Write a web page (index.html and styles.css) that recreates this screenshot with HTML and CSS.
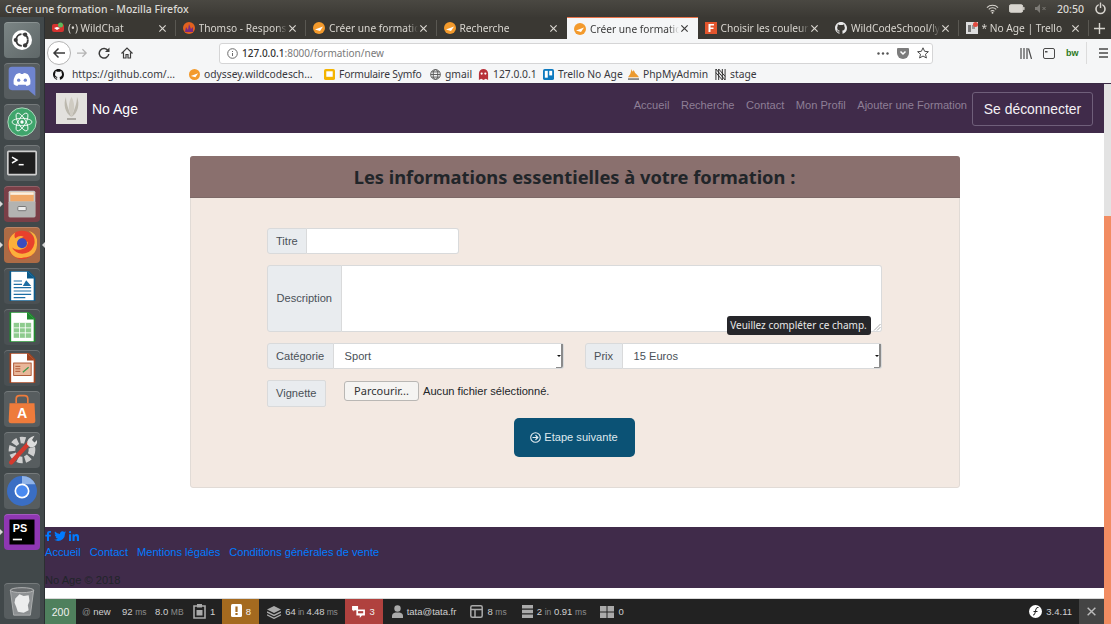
FILE: index.html
```html
<!DOCTYPE html>
<html lang="fr">
<head>
  <meta charset="UTF-8" />
  <meta name="viewport" content="width=device-width, initial-scale=1.0"/>
  <title>Créer une formation</title>
  <link rel="stylesheet" href="styles.css">
</head>
<body>

<svg class="defs" width="0" height="0">
  <symbol id="x" viewBox="0 0 10 10"><path d="M1.5 1.5l7 7M8.5 1.5l-7 7" stroke="currentColor" stroke-width="1.3" fill="none"/></symbol>
  <symbol id="ody" viewBox="0 0 12 12"><circle cx="6" cy="6" r="6" fill="#f39a2c"/><path d="M2 7.5L10 4.5 7 9z" fill="#fff"/></symbol>
  <symbol id="gh" viewBox="0 0 16 16"><path fill="currentColor" d="M8 0C3.58 0 0 3.58 0 8c0 3.54 2.29 6.53 5.47 7.59.4.07.55-.17.55-.38v-1.34c-2.23.48-2.69-1.07-2.69-1.07-.36-.92-.89-1.17-.89-1.17-.73-.5.05-.49.05-.49.8.06 1.23.82 1.23.82.71 1.22 1.87.87 2.33.66.07-.52.28-.87.5-1.07-1.78-.2-3.64-.89-3.64-3.95 0-.87.31-1.59.82-2.15-.08-.2-.36-1.02.08-2.12 0 0 .67-.21 2.2.82A7.6 7.6 0 0 1 8 3.87c.68 0 1.36.09 2 .27 1.53-1.04 2.2-.82 2.2-.82.44 1.1.16 1.92.08 2.12.51.56.82 1.27.82 2.15 0 3.07-1.87 3.75-3.65 3.95.29.25.54.73.54 1.48v2.2c0 .21.15.46.55.38A8 8 0 0 0 16 8c0-4.42-3.58-8-8-8z"/></symbol>
</svg>

<header class="panel">
  <span class="panel-title">Créer une formation - Mozilla Firefox</span>
  <div class="panel-right">
    <svg width="13" height="10" viewBox="0 0 14 10"><path d="M1 3.500a8.500 8.500 0 0 1 12 0M3 5.500a5.500 5.500 0 0 1 8 0M5 7.500a2.500 2.500 0 0 1 4 0" stroke="#d8d5cf" fill="none" stroke-width="1.100"/><circle cx="7" cy="9" r="1" fill="#d8d5cf"/></svg>
    <svg width="16" height="9" viewBox="0 0 17 9"><rect x=".5" y=".5" width="14" height="8" rx="1.500" fill="#d8d5cf" stroke="#d8d5cf"/><rect x="15" y="3" width="1.500" height="3" fill="#d8d5cf"/></svg>
    <svg width="12" height="9" viewBox="0 0 12 9"><path d="M0 3h2l3-3v9L2 6H0z" fill="#7d7b76"/><path d="M7.500 3l3 3M10.500 3l-3 3" stroke="#7d7b76"/></svg>
    <span class="panel-clock">20:50</span>
    <svg width="13" height="13" viewBox="0 0 13 13"><circle cx="6.500" cy="7" r="4.500" fill="none" stroke="#d8d5cf" stroke-width="1.600"/><path d="M6.500 0v6" stroke="#3d3b37" stroke-width="3.500"/><path d="M6.500 .5v5.500" stroke="#d8d5cf" stroke-width="1.500"/></svg>
  </div>
</header>

<div class="desk">

  <nav class="launcher">
    <div class="tile t-ubuntu"><svg viewBox="0 0 36 36"><circle cx="18" cy="18" r="12" fill="#fff"/><circle cx="18" cy="18" r="7" fill="none" stroke="#3a3a3a" stroke-width="2.200" stroke-dasharray="9.500 1.500"/><circle cx="10.500" cy="18" r="2.500" fill="#3a3a3a"/><circle cx="21.800" cy="11.500" r="2.500" fill="#3a3a3a"/><circle cx="21.800" cy="24.500" r="2.500" fill="#3a3a3a"/></svg></div>
    <div class="tile t-grey"><svg viewBox="0 0 36 36"><path d="M6 1h24q4 0 4 4v31l-8-7H6q-4 0-4-4V5q0-4 4-4z" fill="#6f84cf"/><path d="M8 22q-1-7 3-12 3-1.500 5-1.500l.5 1h3l.5-1q2 0 5 1.500 4 5 3 12-2.500 2-4.500 2l-1-1.500h-9l-1 1.500Q10.500 24 8 22z" fill="#fff"/><circle cx="14" cy="17" r="2" fill="#6f84cf"/><circle cx="22" cy="17" r="2" fill="#6f84cf"/></svg></div>
    <div class="tile t-grey"><svg viewBox="0 0 36 36"><circle cx="18" cy="18" r="17" fill="#3fa56c" stroke="#bfe3cb"/><g fill="none" stroke="#fff" stroke-width="1"><ellipse cx="18" cy="18" rx="12" ry="4.500"/><ellipse cx="18" cy="18" rx="12" ry="4.500" transform="rotate(60 18 18)"/><ellipse cx="18" cy="18" rx="12" ry="4.500" transform="rotate(120 18 18)"/></g><circle cx="18" cy="18" r="2" fill="#fff"/></svg></div>
    <div class="tile t-grey"><svg viewBox="0 0 36 36"><rect x="1" y="4" width="34" height="28" rx="1" fill="#1e1e1e" stroke="#cfcfcf" stroke-width="2"/><path d="M6 11l6 3.500L6 18" fill="none" stroke="#fff" stroke-width="1.800"/><path d="M14 20h6" stroke="#fff" stroke-width="1.800"/></svg></div>
    <div class="tile t-files open"><svg viewBox="0 0 36 36"><rect x="2" y="2" width="32" height="32" rx="2" fill="#c8c8c6"/><rect x="4" y="4" width="28" height="11" fill="#f0a868"/><rect x="4" y="4" width="28" height="3" fill="#faf0e2"/><rect x="2" y="15" width="32" height="19" rx="1" fill="#b3b3b1"/><rect x="13" y="21" width="10" height="5" rx="1" fill="#eee" stroke="#666"/></svg></div>
    <div class="tile t-fox open active"><svg viewBox="0 0 36 36"><circle cx="18" cy="18" r="17" fill="#e8412c"/><path d="M3 24Q-1 10 10 3q-2 4 0 7 5-4 10-2-5 2-5 6 5 1 10 0 0 7-7 9-7 2-12-2 5 9 16 7 9-2 11-12 1-9-7-15 12 4 10 17-1 14-16 15Q8 36 3 24z" fill="#fbb03b"/><circle cx="18" cy="16" r="6" fill="#3b4cc0"/></svg></div>
    <div class="tile t-dark"><svg viewBox="0 0 36 36"><path d="M4 0h21l8 8v28H4z" fill="#fff" stroke="#0b5a8a" stroke-width="2"/><path d="M24 0l9 9h-9z" fill="#0b5a8a"/><path d="M8 12h10M8 16h10M8 20h21M8 24h21M8 28h21M8 32h14" stroke="#1c6ea4" stroke-width="1.400"/><path d="M19 18l4-7 6 7z" fill="#1c6ea4"/></svg></div>
    <div class="tile t-dark"><svg viewBox="0 0 36 36"><path d="M4 0h21l8 8v28H4z" fill="#fff" stroke="#1f8a2e" stroke-width="2"/><path d="M24 0l9 9h-9z" fill="#1f8a2e"/><rect x="8" y="13" width="21" height="18" fill="#8ecb8e"/><path d="M8 19h21M8 25h21M15 13v18M22 13v18" stroke="#fff"/></svg></div>
    <div class="tile t-dark"><svg viewBox="0 0 36 36"><path d="M4 0h21l8 8v28H4z" fill="#fff" stroke="#a2431f" stroke-width="2"/><path d="M24 0l9 9h-9z" fill="#a2431f"/><rect x="8" y="12" width="21" height="15" fill="#e9b79a" stroke="#a2431f"/><path d="M10 16h6M10 19h6M10 22h6" stroke="#a2431f"/><path d="M19 23l7-6" stroke="#3a9a4a" stroke-width="1.500"/></svg></div>
    <div class="tile t-grey"><svg viewBox="0 0 36 36"><path d="M3 11h30l1 21q0 3-3 3H5q-3 0-3-3z" fill="#ee7b3b"/><path d="M11 11V6q0-4 4-4h6q4 0 4 4v5" fill="none" stroke="#ee7b3b" stroke-width="2"/><text x="18" y="29" class="tile-letter">A</text></svg></div>
    <div class="tile t-grey"><svg viewBox="0 0 36 36"><circle cx="18" cy="18" r="12" fill="none" stroke="#cfcfcf" stroke-width="8" stroke-dasharray="6 3"/><path d="M5 33L27 9" stroke="#d33a2e" stroke-width="5" stroke-linecap="round"/><path d="M24 11q0-8 9-10l-3 5 3 3 4-4q-1 10-9 10z" fill="#ddd"/></svg></div>
    <div class="tile t-grey"><svg viewBox="0 0 36 36"><circle cx="18" cy="18" r="18" fill="#3a6ec4"/><path d="M18 0a18 18 0 0 1 16 10H18z" fill="#8fb3e8"/><circle cx="18" cy="18" r="9" fill="#fff"/><circle cx="18" cy="18" r="7" fill="#4a8af0"/></svg></div>
    <div class="tile t-storm open"><svg viewBox="0 0 36 36"><rect x="3" y="3" width="30" height="30" fill="#000"/><text x="7" y="18" class="tile-ps">PS</text><rect x="7" y="26" width="11" height="2" fill="#fff"/></svg></div>
    <div class="tile t-grey trash"><svg viewBox="0 0 36 36"><path d="M4 5h28l-4 30H8z" fill="#8d9092" stroke="#b5b7b7"/><ellipse cx="18" cy="5" rx="14" ry="3" fill="#6b6e70" stroke="#c0c2c2"/><path d="M10 15l5-5 5 2 6-1 1 7-2 5 1 6-6 3-7-1-2-6-2-5z" fill="#eceded"/></svg></div>
  </nav>

  <div class="browser">

    <div class="tabs">
      <div class="tab"><svg class="fav" viewBox="0 0 12 12"><rect y="2" width="12" height="8" rx="2" fill="#d5322f"/><circle cx="8.500" cy="3" r="2.500" fill="#5cb85c"/><path d="M2 6l3-1 3 1-3 2z" fill="#fff"/></svg><span class="tab-name">(•) WildChat</span><svg class="close"><use href="#x"/></svg></div>
      <div class="tab"><svg class="fav" viewBox="0 0 12 12"><circle cx="6" cy="6" r="6" fill="#e2611f"/><path d="M2 10l1-5 2 3 1-6 2 5 2-2v5z" fill="#7a2a80"/></svg><span class="tab-name">Thomso - Respons</span><svg class="close"><use href="#x"/></svg></div>
      <div class="tab"><svg class="fav"><use href="#ody"/></svg><span class="tab-name">Créer une formatio</span><svg class="close"><use href="#x"/></svg></div>
      <div class="tab"><svg class="fav"><use href="#ody"/></svg><span class="tab-name">Recherche</span><svg class="close"><use href="#x"/></svg></div>
      <div class="tab active"><svg class="fav"><use href="#ody"/></svg><span class="tab-name">Créer une formatio</span><svg class="close"><use href="#x"/></svg></div>
      <div class="tab"><svg class="fav" viewBox="0 0 12 12"><rect width="12" height="12" fill="#e2552d"/><path d="M3.500 10V2H9v1.500H5.500V5.500H8.500V7H5.500v3z" fill="#fff"/></svg><span class="tab-name">Choisir les couleur</span><svg class="close"><use href="#x"/></svg></div>
      <div class="tab"><svg class="fav gh-fav"><use href="#gh"/></svg><span class="tab-name">WildCodeSchool/ly</span><svg class="close"><use href="#x"/></svg></div>
      <div class="tab"><svg class="fav" viewBox="0 0 12 12"><rect width="12" height="12" fill="#ddd"/><rect x="2" y="3" width="3" height="7" fill="#777"/><rect x="6" y="3" width="3" height="4" fill="#999"/><circle cx="9.500" cy="2.500" r="2.500" fill="#e04a3f"/></svg><span class="tab-name">* No Age | Trello</span><svg class="close"><use href="#x"/></svg></div>
      <svg class="newtab" width="11" height="11" viewBox="0 0 11 11"><path d="M5.500 0v11M0 5.500h11" stroke="#d8d5cf" stroke-width="1.400"/></svg>
    </div>

    <div class="toolbar">
      <span class="back"><svg width="14" height="12" viewBox="0 0 14 12"><path d="M13 6H2M6.500 1.500L2 6l4.500 4.500" fill="none" stroke="#3b3b3b" stroke-width="1.500"/></svg></span>
      <svg class="forward" width="12" height="10" viewBox="0 0 14 12"><path d="M1 6h11M7.500 1.500L12 6l-4.500 4.500" fill="none" stroke="#b4b4b4" stroke-width="1.500"/></svg>
      <svg class="reload" width="12" height="12" viewBox="0 0 12 12"><path d="M10 3.500A4.800 4.800 0 1 0 10.800 7" fill="none" stroke="#3b3b3b" stroke-width="1.500"/><path d="M11.500 .5v4.500H7z" fill="#3b3b3b"/></svg>
      <svg class="home" width="12" height="12" viewBox="0 0 12 12"><path d="M.5 6.500L6 1l5.500 5.500M2.500 5.500V11h2.500V7.500h2V11h2.500V5.500" fill="none" stroke="#3b3b3b" stroke-width="1.200"/></svg>
      <div class="urlbar">
        <svg width="11" height="11" viewBox="0 0 11 11"><circle cx="5.500" cy="5.500" r="4.800" fill="none" stroke="#6b6b6b"/><path d="M5.500 5v3M5.500 3v1" stroke="#6b6b6b"/></svg>
        <span class="url"><b>127.0.0.1</b>:8000/formation/new</span>
        <svg width="12" height="3" viewBox="0 0 12 3"><circle cx="1.500" cy="1.500" r="1.200" fill="#555"/><circle cx="6" cy="1.500" r="1.200" fill="#555"/><circle cx="10.500" cy="1.500" r="1.200" fill="#555"/></svg>
        <svg width="12" height="11" viewBox="0 0 12 11"><path d="M1 0h10q1 0 1 1v4a6 6 0 0 1-12 0V1q0-1 1-1z" fill="#7c7c7c"/><path d="M3.500 3.500L6 6l2.500-2.500" fill="none" stroke="#fff" stroke-width="1.500"/></svg>
        <svg width="12" height="12" viewBox="0 0 12 12"><path d="M6 .8l1.600 3.500 3.800.4-2.900 2.500.9 3.800L6 9l-3.400 2 .9-3.800L.6 4.700l3.800-.4z" fill="none" stroke="#4a4a4a"/></svg>
      </div>
      <div class="tool-right">
        <svg width="12" height="11" viewBox="0 0 12 11"><path d="M1 0v11M4 0v11M7 0v11M8.500 .5l3 10.500" stroke="#4a4a4a" fill="none" stroke-width="1.200"/></svg>
        <svg width="12" height="11" viewBox="0 0 12 11"><rect x=".5" y=".5" width="11" height="10" rx="1.500" fill="none" stroke="#4a4a4a"/><rect x="2" y="3" width="2.500" height="1.500" fill="#4a4a4a"/></svg>
        <span class="bw">bw</span>
        <span class="tool-sep"></span>
        <svg width="12" height="10" viewBox="0 0 12 10"><path d="M2 1h9M2 5h9M2 9h9" stroke="#4a4a4a" stroke-width="1.300"/></svg>
      </div>
    </div>

    <div class="bookmarks">
      <span class="bm b1"><svg class="bm-ic gh-bm"><use href="#gh"/></svg>https://github.com/...</span>
      <span class="bm b2"><svg class="bm-ic"><use href="#ody"/></svg>odyssey.wildcodesch...</span>
      <span class="bm b3"><svg class="bm-ic" viewBox="0 0 12 12"><rect width="12" height="12" rx="2" fill="#f4b400"/><rect x="2.500" y="2.500" width="7" height="6" fill="#fff"/></svg>Formulaire Symfo</span>
      <span class="bm b4"><svg class="bm-ic" viewBox="0 0 12 12"><g fill="none" stroke="#555"><circle cx="6" cy="6" r="5.300"/><ellipse cx="6" cy="6" rx="2.500" ry="5.300"/><path d="M.7 6h10.600M1.500 3.200h9M1.500 8.800h9"/></g></svg>gmail</span>
      <span class="bm b5"><svg class="bm-ic" viewBox="0 0 12 12"><path d="M1 12V5a5 5 0 0 1 10 0v7l-2.500-1.500L6 12l-2.500-1.500z" fill="#b8323a"/><circle cx="4" cy="5" r="1.200" fill="#fff"/><circle cx="8" cy="5" r="1.200" fill="#fff"/></svg>127.0.0.1</span>
      <span class="bm b6"><svg class="bm-ic" viewBox="0 0 12 12"><rect width="12" height="12" rx="2" fill="#0b79bf"/><rect x="2" y="2" width="3.200" height="7.500" fill="#fff"/><rect x="6.800" y="2" width="3.200" height="5" fill="#fff"/></svg>Trello No Age</span>
      <span class="bm b7"><svg class="bm-ic" viewBox="0 0 12 12"><path d="M0 9Q3 6 4 0q1 5 2 1 2 3 1.500 3Q10 6 12 9z" fill="#ec9a2f"/><path d="M0 10h12v2H0z" fill="#8a8a8a"/></svg>PhpMyAdmin</span>
      <span class="bm b8"><svg class="bm-ic" viewBox="0 0 12 12"><path d="M1 0v12M4 0v12M8 0v12M11 0v12M1 0l10 12M4 0l7 8M1 4l7 8" stroke="#222" fill="none"/></svg>stage</span>
    </div>

    <div class="viewport">
      <div class="content">

        <div class="site-nav">
          <a class="brand">
            <span class="brand-logo"><svg width="31" height="31" viewBox="0 0 31 31"><rect width="31" height="31" fill="#e3e1de"/><path d="M15.500 24C9 20 7 11 10 4c0 7 3 13 5.500 20zM15.500 24C22 20 24 11 21 4c0 7-3 13-5.500 20z" fill="#bcb8ae"/><path d="M15.500 24C12 17 12 10 15.500 4 19 10 19 17 15.500 24z" fill="#cfcbc2"/><path d="M11 26h9" stroke="#77736a"/></svg></span>
            No Age
          </a>
          <div class="site-links">
            <a>Accueil</a><a>Recherche</a><a>Contact</a><a>Mon Profil</a><a>Ajouter une Formation</a>
          </div>
          <a class="logout">Se déconnecter</a>
        </div>

        <main class="site-main">
          <section class="card">
            <h2 class="card-head">Les informations essentielles à votre formation :</h2>
            <form class="card-body">

              <div class="group group-title">
                <span class="addon">Titre</span>
                <span class="field"></span>
              </div>

              <div class="group group-desc">
                <span class="addon addon-desc">Description</span>
                <span class="field">
                  <svg class="resize" width="8" height="8" viewBox="0 0 8 8"><path d="M7.500 1L1 7.500M7.500 4L4 7.500" stroke="#aaa"/></svg>
                  <span class="tooltip">Veuillez compléter ce champ.</span>
                </span>
              </div>

              <div class="form-row">
                <div class="group">
                  <span class="addon">Catégorie</span>
                  <span class="field select"><span>Sport</span><i class="select-arrow"></i></span>
                </div>
                <div class="group">
                  <span class="addon">Prix</span>
                  <span class="field select"><span>15 Euros</span><i class="select-arrow"></i></span>
                </div>
              </div>

              <div class="file-row">
                <span class="addon addon-file">Vignette</span>
                <span class="file-btn">Parcourir...</span>
                <span class="file-name">Aucun fichier sélectionné.</span>
              </div>

              <div class="submit-row">
                <a class="submit"><svg width="11" height="11" viewBox="0 0 11 11"><circle cx="5.500" cy="5.500" r="4.800" fill="none" stroke="#e6eef2" stroke-width="1.100"/><path d="M2.500 5.500h5M5.500 3.200l2.300 2.300-2.300 2.300" fill="none" stroke="#e6eef2" stroke-width="1.200"/></svg>Etape suivante</a>
              </div>

            </form>
          </section>
        </main>

        <footer class="site-foot">
          <div class="socials">
            <svg width="6" height="10" viewBox="0 0 6 10"><path d="M2 10V5.500H.3V3.800H2V2.500C2 .8 3 0 4.400 0H6v1.700H5c-.8 0-1 .4-1 1v1.100h2l-.3 1.700H4V10z" fill="#007bff"/></svg>
            <svg width="12" height="10" viewBox="0 0 12 10"><path d="M12 1.200q-.7.300-1.400.4.800-.5 1.100-1.300-.7.400-1.500.6A2.500 2.500 0 0 0 6 3Q3 2.800 1 .5q-1 1.900.7 3.300-.5 0-1-.3 0 1.900 1.900 2.400-.5.100-1 0 .5 1.600 2.300 1.700Q2.200 9 0 8.800 5 11.300 8.900 8q2.300-2.300 2-5.500.7-.5 1.100-1.300z" fill="#007bff"/></svg>
            <svg width="10" height="10" viewBox="0 0 10 10"><path d="M0 3.300h2.100V10H0zM1 0a1.100 1.100 0 1 1 0 2.300A1.100 1.100 0 0 1 1 0zM3.500 3.300h2v.9Q6.100 3.100 7.500 3.100 10 3.100 10 6v4H7.900V6.500q0-1.600-1.100-1.600-1.200 0-1.200 1.600V10H3.500z" fill="#007bff"/></svg>
          </div>
          <div class="foot-links">
            <a>Accueil</a><a>Contact</a><a>Mentions légales</a><a>Conditions générales de vente</a>
          </div>
          <p class="copy">No Age © 2018</p>
        </footer>

        <div class="sf-bar">
          <span class="sf-item sf-green">200</span>
          <span class="sf-item s-route"><span><small>@</small> new</span></span>
          <span class="sf-item s-time"><span>92 <small>ms</small></span></span>
          <span class="sf-item s-mem"><span>8.0 <small>MB</small></span></span>
          <span class="sf-item s-forms"><svg width="13" height="15" viewBox="0 0 13 15"><path d="M1 2h11v12H1z" fill="none" stroke="#aaa" stroke-width="1.600"/><rect x="4" y="0" width="5" height="3.500" fill="#aaa"/><rect x="3.500" y="6" width="6" height="5.500" fill="#aaa"/></svg><b>1</b></span>
          <span class="sf-item sf-orange"><svg width="11" height="15" viewBox="0 0 11 15"><rect width="11" height="13" rx="1.500" fill="#fff"/><path d="M5.500 2.500v5.500M5.500 9v2" stroke="#a46a1f" stroke-width="2.200"/></svg><b>8</b></span>
          <span class="sf-item s-layers"><svg width="14" height="14" viewBox="0 0 14 14"><path d="M7 1l7 3.500L7 8 0 4.500z" fill="#aaa"/><path d="M0 7l7 3.500L14 7M0 9.800l7 3.500 7-3.500" fill="none" stroke="#aaa" stroke-width="1.400"/></svg><span>64 <small>in</small> 4.48 <small>ms</small></span></span>
          <span class="sf-item sf-red"><svg width="13" height="12" viewBox="0 0 15 14"><path d="M0 0h7v5H3L1.500 6.500V5H0z" fill="#fff"/><path d="M5 4h10v7h-3.500L9 14v-3H5z" fill="#fff"/><rect x="7" y="6" width="6" height="2.500" fill="#b0413e"/></svg><b>3</b></span>
          <span class="sf-item s-user"><svg width="11" height="13" viewBox="0 0 11 13"><circle cx="5.500" cy="3.500" r="3.200" fill="#aaa"/><path d="M0 13v-2q0-3 3.500-3.500h4Q11 8 11 11v2z" fill="#aaa"/></svg><span>tata@tata.fr</span></span>
          <span class="sf-item s-twig"><svg width="13" height="13" viewBox="0 0 13 13"><rect x=".8" y=".8" width="11.400" height="11.400" rx="1.500" fill="none" stroke="#aaa" stroke-width="1.500"/><path d="M1 4.500h11M5 4.500V12" stroke="#aaa" stroke-width="1.500"/></svg><span>8 <small>ms</small></span></span>
          <span class="sf-item s-db"><svg width="11" height="13" viewBox="0 0 11 13"><path d="M0 0h11v3.500H0zM0 4.700h11v3.600H0zM0 9.500h11V13H0z" fill="#aaa"/></svg><span>2 <small>in</small> 0.91 <small>ms</small></span></span>
          <span class="sf-item s-grid"><svg width="14" height="12" viewBox="0 0 14 12"><path d="M0 0h6.500v5.500H0zM7.500 0H14v5.500H7.500zM0 6.500h6.500V12H0zM7.500 6.500H14V12H7.500z" fill="#aaa"/></svg><span>0</span></span>
          <span class="sf-item s-version"><svg width="13" height="13" viewBox="0 0 13 13"><circle cx="6.500" cy="6.500" r="6.500" fill="#fff"/><path d="M4 10q1.500.5 2-2l1-4q.5-2 2.500-1.500M4.500 6.500h4" fill="none" stroke="#222" stroke-width="1"/></svg><span>3.4.11</span></span>
          <span class="sf-close"><svg width="11" height="11"><use href="#x"/></svg></span>
        </div>

      </div>
      <div class="scrollbar"><div class="scroll-thumb"></div></div>
    </div>

  </div>
</div>

</body>
</html>
```

FILE: styles.css
```css
* {
  box-sizing: border-box;
}

html, body {
  height: 100%;
}

body {
  margin: 0;
  display: flex;
  flex-direction: column;
  overflow: hidden;
  font-family: "Liberation Sans", Arial, sans-serif;
  font-size: 11.100px;
  color: #212529;
  background-color: #fff;
}

.defs {
  position: absolute;
}

/* ubuntu top panel */
.panel {
  height: 17px;
  flex: none;
  display: flex;
  align-items: center;
  justify-content: space-between;
  padding: 0 4px 0 5px;
  background: linear-gradient(#4a4842, #3b3934);
  color: #dcdad5;
  font-family: "Noto Sans", sans-serif;
  font-size: 10.500px;
  font-weight: 500;
}

.panel-right {
  display: flex;
  align-items: center;
  gap: 10px;
}

.desk {
  flex: 1;
  display: flex;
  min-height: 0;
}

/* launcher */
.launcher {
  width: 45px;
  flex: none;
  display: flex;
  flex-direction: column;
  gap: 5px;
  padding: 5px 0 5px 4px;
  background-color: #41484a;
  border-right: 1px solid #2c3032;
}

.tile {
  position: relative;
  width: 36px;
  height: 36px;
  padding: 3px;
  border-radius: 4px;
  box-shadow: inset 0 1px rgba(255, 255, 255, .18);
  flex: none;
}

.tile svg {
  display: block;
  width: 30px;
  height: 30px;
}

.t-ubuntu {
  background: linear-gradient(135deg, #7b8585, #5f6768);
}

.t-grey {
  background-color: #575d5f;
}

.t-dark {
  background-color: #4a5053;
}

.t-files {
  background-color: #7a3f47;
}

.t-fox {
  background-color: #ad6b45;
}

.t-storm {
  background-color: #8f37b3;
}

.trash {
  margin-top: auto;
}

.tile.open::before {
  content: "";
  position: absolute;
  left: -4px;
  top: 15px;
  border: 3px solid transparent;
  border-left-color: #d8d8d8;
}

.tile.active::after {
  content: "";
  position: absolute;
  right: -5px;
  top: 15px;
  border: 3px solid transparent;
  border-right-color: #d8d8d8;
}

.tile-letter {
  font-family: "Liberation Sans", sans-serif;
  font-size: 17px;
  font-weight: bold;
  fill: #fff;
  text-anchor: middle;
}

.tile-ps {
  font-family: "Liberation Sans", sans-serif;
  font-size: 13px;
  font-weight: bold;
  fill: #fff;
}

/* firefox */
.browser {
  flex: 1;
  min-width: 0;
  display: flex;
  flex-direction: column;
}

.tabs {
  height: 22px;
  flex: none;
  display: flex;
  align-items: stretch;
  background-color: #3a3833;
  color: #d9d6d0;
  font-family: "Noto Sans", sans-serif;
  font-size: 10.200px;
}

.tab {
  flex: 0 0 130.500px;
  min-width: 0;
  display: flex;
  align-items: center;
  gap: 4px;
  padding: 0 9px 0 7px;
  position: relative;
}

.tab::after {
  content: "";
  position: absolute;
  right: 0;
  top: 3px;
  bottom: 3px;
  width: 1px;
  background-color: #5a5852;
}

.tab:nth-child(4)::after,
.tab:nth-child(5)::after,
.tab:nth-child(6)::after {
  display: none;
}

.tab.active {
  background-color: #f5f6f7;
  color: #3b3b3b;
  border-top: 1px solid #e8734a;
}

.fav {
  width: 12px;
  height: 12px;
  flex: none;
}

.gh-fav {
  color: #e8e8e8;
}

.tab-name {
  flex: 1;
  min-width: 0;
  margin-right: -3px;
  white-space: nowrap;
  -webkit-mask-image: linear-gradient(to left, transparent, #000 10px);
  mask-image: linear-gradient(to left, transparent, #000 10px);
}

.close {
  width: 9px;
  height: 9px;
  flex: none;
}

.newtab {
  margin: auto 0 auto 5px;
}

.toolbar {
  height: 28px;
  flex: none;
  display: flex;
  align-items: center;
  background-color: #f5f6f7;
  padding-left: 2px;
}

.back {
  width: 24px;
  height: 24px;
  border-radius: 50%;
  background-color: #fff;
  border: 1px solid #b3b3b3;
  display: flex;
  align-items: center;
  justify-content: center;
  flex: none;
}

.forward {
  margin-left: 5px;
  flex: none;
}

.reload {
  margin-left: 10px;
  flex: none;
}

.home {
  margin-left: 11px;
  flex: none;
}

.urlbar {
  width: 714px;
  height: 21px;
  margin-left: 86px;
  flex: none;
  display: flex;
  align-items: center;
  gap: 8px;
  padding: 0 3px 0 7px;
  background-color: #fff;
  border: 1px solid #d5d5d6;
  border-radius: 3px;
  color: #7a7a7a;
  font-family: "Noto Sans", sans-serif;
  font-size: 10px;
}

.url {
  flex: 1;
  margin-left: -4px;
}

.url b {
  font-weight: 500;
  color: #333;
}

.tool-right {
  flex: 1;
  display: flex;
  align-items: center;
  padding-left: 87px;
  gap: 11px;
  color: #4a4a4a;
}

.bw {
  color: #2d7a1e;
  font-weight: bold;
  font-size: 9px;
}

.tool-sep {
  width: 1px;
  height: 22px;
  margin: 0 -1px 0 -4px;
  background-color: #dcdcdc;
}

.bookmarks {
  height: 16px;
  flex: none;
  display: flex;
  align-items: center;
  padding: 0 0 2px 8px;
  background-color: #f5f6f7;
  color: #38383d;
  font-family: "Noto Sans", sans-serif;
  font-size: 10.300px;
  white-space: nowrap;
}

.bm {
  display: inline-flex;
  align-items: center;
  gap: 4px;
}

.bm-ic {
  width: 11px;
  height: 11px;
  flex: none;
}

.gh-bm {
  color: #111;
  margin-right: 4px;
}

.b1 { width: 136px; }
.b2 { width: 135px; }
.b3 { width: 106px; letter-spacing: -.2px; }
.b4 { width: 48px; }
.b5 { width: 65px; }
.b6 { width: 85px; }
.b7 { width: 87px; }

/* page */
.viewport {
  flex: 1;
  min-height: 0;
  display: flex;
  border-top: 1px solid #3a2a44;
}

.content {
  flex: 1;
  min-width: 0;
  display: flex;
  flex-direction: column;
}

.scrollbar {
  width: 7px;
  flex: none;
  background-color: #e3e3e3;
  display: flex;
  flex-direction: column;
}

.scroll-thumb {
  flex: 1;
  margin-top: 132px;
  background-color: #f28c62;
}

.site-nav {
  height: 49px;
  flex: none;
  display: flex;
  align-items: center;
  padding: 0 11px;
  background-color: #402b4a;
}

.brand {
  display: flex;
  align-items: center;
  gap: 5px;
  color: #fff;
  font-size: 14px;
}

.brand-logo {
  display: block;
  height: 31px;
}

.brand-logo svg {
  display: block;
}

.site-links {
  margin-left: auto;
  display: flex;
  gap: 11.500px;
  padding-bottom: 7px;
  color: #8e7f96;
}

.logout {
  width: 121px;
  margin-left: 5px;
  padding: 8px 0;
  border: 1px solid #6f5f7a;
  border-radius: 3px;
  color: #f4f1f5;
  font-size: 13.900px;
  line-height: 16px;
  text-align: center;
}

.site-main {
  flex: 1;
  display: flex;
  justify-content: center;
  padding-top: 23px;
  background-color: #fff;
}

.card {
  width: 770px;
  height: 332px;
  background-color: #f3e9e2;
  border: 1px solid #e1dbd6;
  border-radius: 3px;
}

.card-head {
  height: 42px;
  margin: -1px -1px 0;
  background-color: #8a706e;
  border-bottom: 1px solid #7d6967;
  border-radius: 3px 3px 0 0;
  font-family: "Noto Sans", sans-serif;
  font-size: 18.300px;
  font-weight: 700;
  line-height: 42px;
  text-align: center;
  color: #212529;
}

.card-body {
  display: flex;
  flex-direction: column;
  gap: 11px;
  padding: 30px 77px 0 76px;
}

.group {
  display: flex;
  height: 26px;
  flex: 1;
}

.group-title {
  flex: none;
  width: 192px;
}

.group-desc {
  flex: none;
  height: 67px;
}

.addon {
  display: flex;
  align-items: center;
  padding: 0 8.500px;
  background-color: #e9ecef;
  border: 1px solid #d9dadb;
  border-radius: 3px 0 0 3px;
  color: #495057;
}

.addon-desc {
  padding: 0 9px 2px;
}

.field {
  position: relative;
  flex: 1;
  display: flex;
  align-items: center;
  background-color: #fff;
  border: 1px solid #d9dadb;
  border-left: none;
  border-radius: 0 3px 3px 0;
  color: #495057;
}

.select {
  padding-left: 11px;
}

.select span {
  flex: 1;
}

.select-arrow {
  width: 7px;
  height: 100%;
  position: relative;
  border-right: 2px solid #8b8b8b;
  border-bottom: 1px solid #8b8b8b;
  border-radius: 0 0 2px 0;
}

.select-arrow::after {
  content: "";
  position: absolute;
  left: 1px;
  top: 11px;
  border: 2px solid transparent;
  border-top-color: #111;
}

.resize {
  position: absolute;
  right: 0;
  bottom: 0;
}

.tooltip {
  position: absolute;
  right: 10px;
  bottom: -4px;
  width: 144px;
  height: 19px;
  background-color: #26262a;
  border-radius: 3px;
  color: #e8e8e8;
  font-family: "Noto Sans", sans-serif;
  font-size: 10px;
  line-height: 19px;
  text-align: center;
  white-space: nowrap;
}

.form-row {
  display: flex;
  gap: 21px;
}

.file-row {
  display: flex;
  height: 27px;
  align-items: flex-start;
}

.addon-file {
  height: 27px;
  padding-bottom: 1px;
  border-radius: 2px;
}

.file-btn {
  width: 75px;
  height: 20px;
  margin: 1px 0 0 18px;
  background-color: #f5f4f2;
  border: 1px solid #b9b7b4;
  border-radius: 3px;
  color: #333;
  font-family: "Noto Sans", sans-serif;
  font-size: 11px;
  line-height: 18px;
  text-align: center;
}

.file-name {
  margin: 5px 0 0 4px;
}

.submit-row {
  display: flex;
  justify-content: center;
}

.submit {
  width: 121px;
  height: 39px;
  display: flex;
  align-items: center;
  justify-content: center;
  gap: 3px;
  padding-bottom: 1px;
  background-color: #0b5275;
  border-radius: 5px;
  color: #dfe9ee;
}

.site-foot {
  height: 61px;
  flex: none;
  margin-bottom: 10px;
  background-color: #402b4a;
}

.socials {
  height: 17px;
  display: flex;
  align-items: center;
  gap: 3px;
  padding-top: 1px;
}

.foot-links {
  display: flex;
  gap: 9px;
  color: #007bff;
  line-height: 16px;
}

.copy {
  margin: 12px 0 0;
  line-height: 16px;
}

/* symfony toolbar */
.sf-bar {
  height: 26px;
  flex: none;
  display: flex;
  align-items: stretch;
  background-color: #222;
  border-top: 1px solid #d8d8d8;
  color: #d0d0d0;
  font-size: 9.500px;
}

.sf-bar small {
  font-size: 8.500px;
  color: #8c8c8c;
}

.sf-bar b {
  font-weight: normal;
}

.sf-item {
  display: flex;
  align-items: center;
  gap: 4px;
  white-space: nowrap;
}

.sf-green {
  width: 31px;
  justify-content: center;
  background-color: #4f805d;
  color: #f0f0f0;
  font-size: 10.500px;
}

.sf-orange {
  width: 37px;
  justify-content: center;
  margin-left: 7px;
  background-color: #a46a1f;
  color: #f0f0f0;
}

.sf-red {
  width: 38px;
  justify-content: center;
  margin-left: 7px;
  background-color: #b0413e;
  color: #f0f0f0;
}

.s-route { margin-left: 6px; width: 26px; }
.s-time { margin-left: 14px; width: 22px; }
.s-mem { margin-left: 11px; width: 27px; }
.s-forms { margin-left: 11px; }
.s-layers { margin-left: 8px; letter-spacing: -.2px; }
.s-user { margin-left: 9px; }
.s-twig { margin-left: 14px; }
.s-db { margin-left: 15px; }
.s-grid { margin-left: 14px; }

.s-version {
  margin-left: auto;
  padding-right: 7px;
}

.sf-close {
  width: 25px;
  display: flex;
  align-items: center;
  justify-content: center;
  background-color: #444;
  color: #bbb;
}
```
